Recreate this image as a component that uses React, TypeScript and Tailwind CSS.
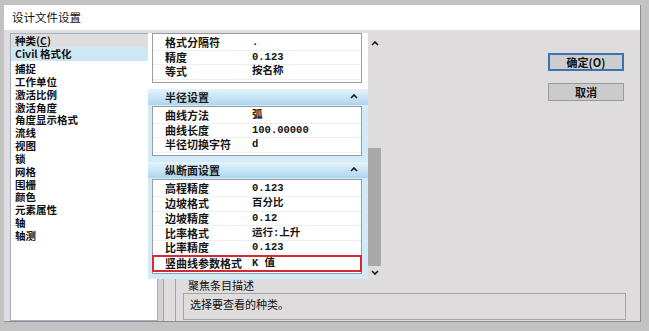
import React from "react";

const cjk = "font-['Noto_Sans_CJK_SC','Liberation_Sans',sans-serif]";
const mono = "font-['Liberation_Mono','Noto_Sans_CJK_SC',monospace]";

const categories = [
  "捕捉",
  "工作单位",
  "激活比例",
  "激活角度",
  "角度显示格式",
  "流线",
  "视图",
  "锁",
  "网格",
  "围栅",
  "颜色",
  "元素属性",
  "轴",
  "轴测",
];

type Row = { label: string; value: string; hl?: boolean };

const formatRows: Row[] = [
  { label: "格式分隔符", value: "." },
  { label: "精度", value: "0.123" },
  { label: "等式", value: "按名称" },
];

const radiusRows: Row[] = [
  { label: "曲线方法", value: "弧" },
  { label: "曲线长度", value: "100.00000" },
  { label: "半径切换字符", value: "d" },
];

const profileRows: Row[] = [
  { label: "高程精度", value: "0.123" },
  { label: "边坡格式", value: "百分比" },
  { label: "边坡精度", value: "0.12" },
  { label: "比率格式", value: "运行:上升" },
  { label: "比率精度", value: "0.123" },
  { label: "竖曲线参数格式", value: "K 值", hl: true },
];

function Chevron({ down = false }: { down?: boolean }) {
  return (
    <svg width="8" height="5" viewBox="0 0 8 5">
      <polyline
        points={down ? "1,1 4,4 7,1" : "1,4 4,1 7,4"}
        fill="none"
        stroke="#111"
        strokeWidth="1.6"
      />
    </svg>
  );
}

function PropBox({ rows, h }: { rows: Row[]; h: string }) {
  return (
    <div className="border border-[#9c9c9c] bg-white pt-[2px] pb-[2px]">
      {rows.map((r) => (
        <div
          key={r.label}
          className={`flex ${h} items-center ${
            r.hl ? "outline-2 outline-[#d42a32] -outline-offset-1 relative" : "border-b border-[#efefef]"
          }`}
        >
          <div className={`w-[95px] pl-[12px] text-[11px] leading-[13px] font-semibold text-[#151515] ${cjk}`}>{r.label}</div>
          <div className={`flex-1 pl-[4px] text-[10.5px] leading-[13px] font-bold text-[#151515] ${mono}`}>{r.value}</div>
        </div>
      ))}
    </div>
  );
}

function SectionHeader({ title }: { title: string }) {
  return (
    <div className="h-[20px] flex items-center justify-between pl-[17px] pr-[10px] bg-gradient-to-b from-[#e6f3fb] to-[#acd7f0]">
      <span className={`text-[11px] font-bold text-[#1a1a1a] ${cjk}`}>{title}</span>
      <Chevron />
    </div>
  );
}

export default function App() {
  return (
    <div className={`w-[649px] h-[331px] bg-[#c2c2c2] pt-[5px] pl-[4px] overflow-hidden ${cjk}`}>
      <div className="w-[637px] h-[317px] flex flex-col bg-[#dedcdc] border-b border-r border-[#8e8e8e]">
        {/* Title bar */}
        <div className="h-[25px] bg-white pl-[8px] flex items-center text-[11.5px] text-[#111]">
          设计文件设置
        </div>

        {/* Body */}
        <div className="flex-1 flex pt-[3px] pl-[6px]">
          {/* Category list */}
          <div className="w-[148px] h-[288px] bg-white border border-[#9fb0c2] text-[10.5px] font-semibold text-[#111]">
            <div className="h-[13px] bg-[#dedede] pl-[4px] leading-[13px]">种类(<span className="underline">C</span>)</div>
            <div className="h-[14px] bg-[#cde7f7] pl-[4px] leading-[14px]">Civil 格式化</div>
            <div className="pt-[2px]">
              {categories.map((c) => (
                <div key={c} className="pl-[4px] leading-[12.85px] h-[12.85px]">
                  {c}
                </div>
              ))}
            </div>
          </div>

          {/* Right side */}
          <div className="flex-1 flex flex-col -ml-[10px] relative z-10">
            <div className="flex h-[246px]">
              {/* Property grid */}
              <div className="w-[220px] flex flex-col overflow-hidden">
                <div className="bg-white pl-[4px] pr-[6px] pb-[6px]">
                  <PropBox rows={formatRows} h="h-[14.5px]" />
                </div>
                <SectionHeader title="半径设置" />
                <div className="bg-[#d3ebf8] pl-[4px] pr-[6px] pt-[1px] pb-[6px]">
                  <PropBox rows={radiusRows} h="h-[14.5px]" />
                </div>
                <SectionHeader title="纵断面设置" />
                <div className="bg-[#d3ebf8] pl-[4px] pr-[6px] pt-[1px] pb-[6px]">
                  <PropBox rows={profileRows} h="h-[14.75px]" />
                </div>
              </div>

              {/* Scrollbar */}
              <div className="w-[13px] flex flex-col">
                <div className="h-[20px] flex items-center justify-center">
                  <Chevron />
                </div>
                <div className="h-[95px]" />
                <div className="h-[118px] bg-[#a9a9a9]" />
                <div className="h-[13px] flex items-center justify-center">
                  <Chevron down />
                </div>
              </div>

              <div className="flex-1" />

              {/* Buttons */}
              <div className="w-[76px] mr-[16px] pt-[20px] flex flex-col gap-[12px]">
                <button className="h-[18px] border-2 border-[#3a74b4] bg-[#cdcdcd] text-[11px] font-bold text-[#111] leading-none">
                  确定(O)
                </button>
                <button className="h-[18px] border border-[#9a9a9a] bg-[#cbcbcb] text-[11px] font-bold text-[#111] leading-none">
                  取消
                </button>
              </div>
            </div>

            {/* Description */}
            <div className="flex-1 flex">
              <div className="w-[10px]" />
              <div className="w-[5px] bg-[#d2d2d2]" />
              <div className="w-[12px] border-l border-[#a3a3a3]" />
              <div className="flex-1 border-l border-[#a3a3a3] flex flex-col">
                <div className="pl-[12px] text-[11px] leading-[12px] text-[#111]">聚焦条目描述</div>
                <div className="ml-[7px] mr-[14px] mt-[2px] h-[27px] border border-[#a4a4a4] pl-[6px] pt-[4px] text-[11px] leading-[13px] text-[#111]">
                  选择要查看的种类。
                </div>
              </div>
            </div>
          </div>
        </div>
      </div>
    </div>
  );
}
